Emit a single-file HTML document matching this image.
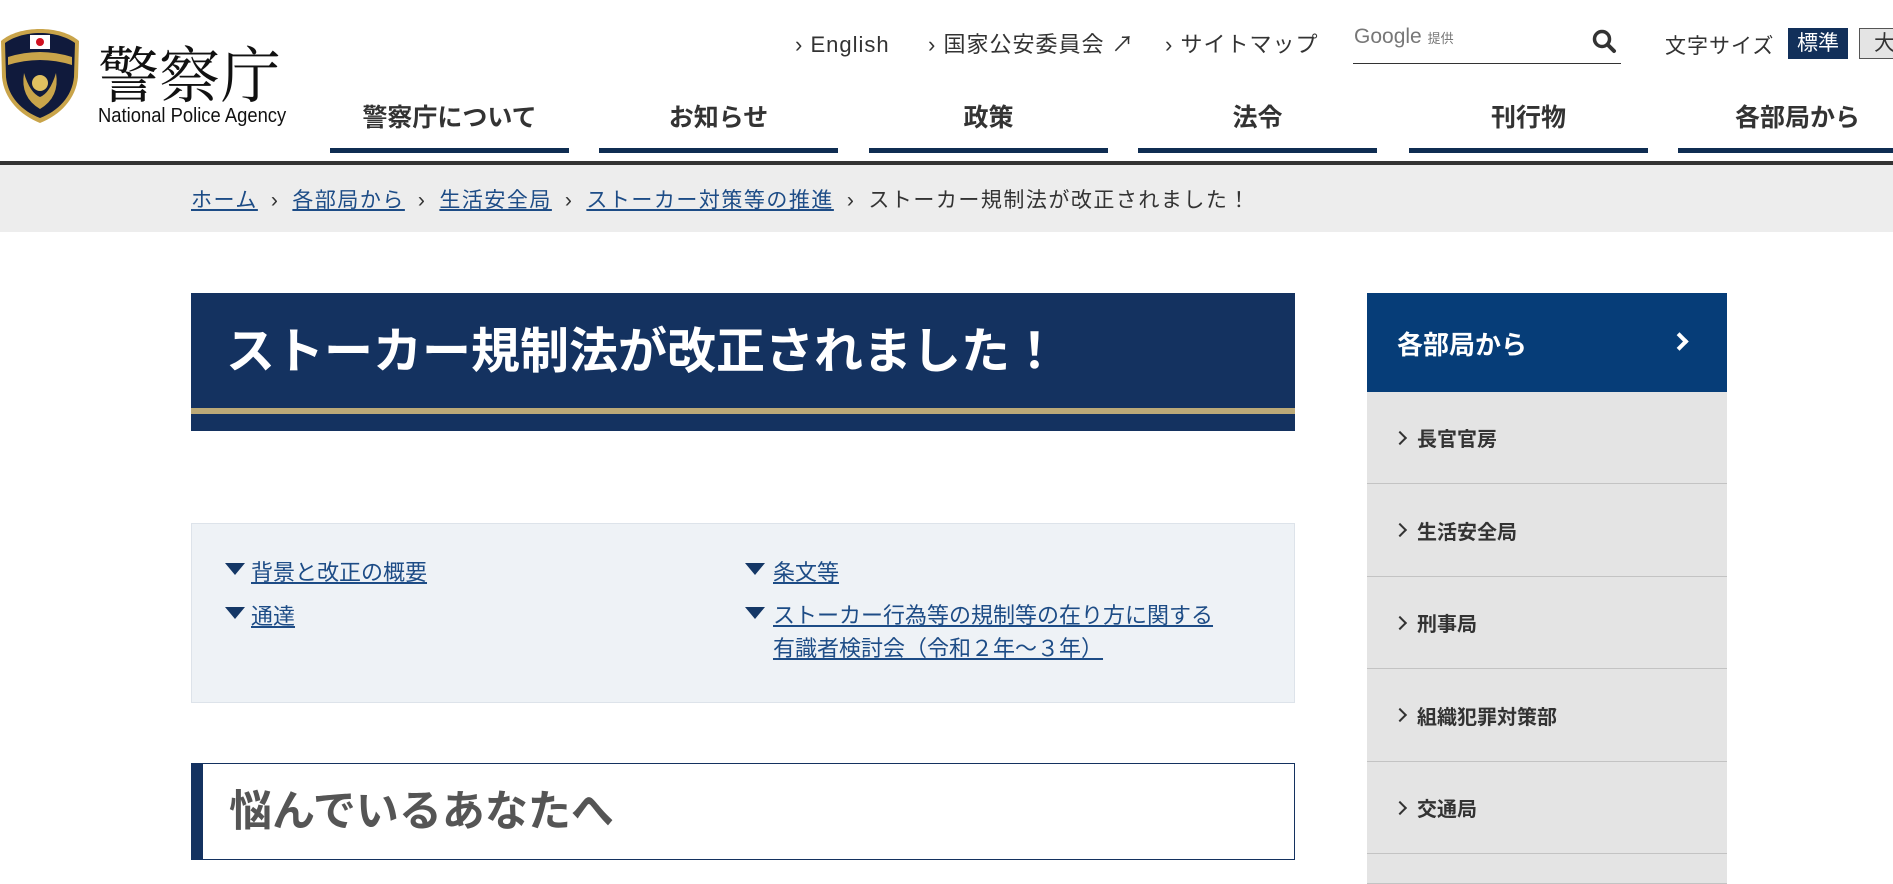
<!DOCTYPE html>
<html><head><meta charset="utf-8"><style>
*{margin:0;padding:0;box-sizing:border-box}
body{width:1893px;height:876px;overflow:hidden;background:#fff;font-family:"Liberation Sans","Noto Sans CJK JP",sans-serif;color:#333;position:relative}
.a{position:absolute;white-space:nowrap}
.nav{position:absolute;top:98px;width:239px;text-align:center;font-weight:bold;font-size:25px;color:#333;height:55px;border-bottom:5px solid #0f2d52}
.tl{font-size:22px;color:#333;top:30px;line-height:30px;letter-spacing:1px}
.bc{font-size:21px;top:186px;line-height:30px;letter-spacing:1.5px}
.bc u{color:#1d4c86}
.bc i{font-style:normal;margin:0 13px}
.lnk{font-size:22px;color:#1d4c86;text-decoration:underline}
.tri{position:absolute;width:0;height:0;border-left:10px solid transparent;border-right:10px solid transparent;border-top:12px solid #143766}
.side{position:absolute;left:1367px;width:360px;background:#e4e4e4;border-bottom:1px solid #c3c3c3;font-weight:bold;font-size:20px;color:#333;padding-left:50px;display:flex;align-items:center}
.side.c:before{content:"";position:absolute;left:28px;width:8px;height:8px;border-top:2px solid #333;border-right:2px solid #333;transform:rotate(45deg)}
</style></head><body>
<svg class="a" style="left:0;top:27px" width="80" height="97" viewBox="0 0 80 97">
<path d="M40 2 C55 2 70 6 79 14 L78 50 C76 72 60 88 40 96 C20 88 4 72 2 50 L1 14 C10 6 25 2 40 2Z" fill="#c9a44a"/>
<path d="M40 6 C54 6 67 10 75 16 L74 50 C72 70 58 84 40 91 C22 84 8 70 6 50 L5 16 C13 10 26 6 40 6Z" fill="#101a3c"/>
<rect x="30" y="8" width="20" height="14" fill="#fff"/><circle cx="40" cy="15" r="4" fill="#d01020"/>
<path d="M8 30 Q40 20 72 30 L72 38 Q40 28 8 38Z" fill="#c9a44a"/>
<path d="M24 46 Q20 70 40 82 Q60 70 56 46 Q50 66 40 70 Q30 66 24 46Z" fill="#c9a44a"/>
<circle cx="40" cy="56" r="8" fill="#e0c060"/>
</svg>
<div class="a" style="left:98px;top:36px;font-family:'Noto Serif CJK SC','Liberation Serif',serif;font-size:61px;line-height:72px;color:#111">警察庁</div>
<div class="a" style="left:98px;top:105px;font-family:'Liberation Sans Narrow','Liberation Sans',sans-serif;font-size:20px;color:#111;transform:scaleX(0.92);transform-origin:left">National Police Agency</div>
<div class="a tl" style="left:795px">› English</div>
<div class="a tl" style="left:928px">› 国家公安委員会 ↗</div>
<div class="a tl" style="left:1165px">› サイトマップ</div>
<div class="a" style="left:1353px;top:22px;width:268px;height:42px;border-bottom:1px solid #333"><span style="font-size:21px;color:#777;position:absolute;left:1px;top:3px">Google <span style="font-size:13px">提供</span></span>
<svg style="position:absolute;left:238px;top:6px" width="26" height="26" viewBox="0 0 26 26"><circle cx="11" cy="11" r="7.5" fill="none" stroke="#333" stroke-width="3.5"/><path d="M16.5 16.5 L23 23" stroke="#333" stroke-width="4" stroke-linecap="round"/></svg></div>
<div class="a" style="left:1665px;top:30px;font-size:21px;color:#333;letter-spacing:1px">文字サイズ</div>
<div class="a" style="left:1788px;top:28px;width:60px;height:31px;background:#12305a;color:#fff;font-size:21px;text-align:center;line-height:31px">標準</div>
<div class="a" style="left:1859px;top:28px;width:60px;height:31px;background:#e4e4e4;border:1px solid #555;color:#333;font-size:21px;padding-left:14px;line-height:29px">大</div>
<div class="nav" style="left:330px">警察庁について</div>
<div class="nav" style="left:599px">お知らせ</div>
<div class="nav" style="left:869px">政策</div>
<div class="nav" style="left:1138px">法令</div>
<div class="nav" style="left:1409px">刊行物</div>
<div class="nav" style="left:1678px">各部局から</div>
<div class="a" style="left:0;top:161px;width:1893px;height:4px;background:#333"></div>
<div class="a" style="left:0;top:165px;width:1893px;height:67px;background:#ededed"></div>
<div class="a bc" style="left:191px"><u>ホーム</u><i>›</i><u>各部局から</u><i>›</i><u>生活安全局</u><i>›</i><u>ストーカー対策等の推進</u><i>›</i>ストーカー規制法が改正されました！</div>
<div class="a" style="left:191px;top:293px;width:1104px;height:138px;background:#143260"></div>
<div class="a" style="left:191px;top:408px;width:1104px;height:6px;background:#bba978"></div>
<div class="a" style="left:226px;top:322px;font-size:49px;font-weight:bold;color:#fff;line-height:60px">ストーカー規制法が改正されました！</div>
<div class="a" style="left:191px;top:523px;width:1104px;height:180px;background:#eef2f6;border:1px solid #dde3ea"></div>
<div class="tri" style="left:225px;top:563px"></div><div class="a lnk" style="left:251px;top:555px">背景と改正の概要</div>
<div class="tri" style="left:225px;top:607px"></div><div class="a lnk" style="left:251px;top:599px">通達</div>
<div class="tri" style="left:745px;top:563px"></div><div class="a lnk" style="left:773px;top:555px">条文等</div>
<div class="tri" style="left:745px;top:607px"></div><div class="a lnk" style="left:773px;top:599px;line-height:33px;white-space:normal;width:450px">ストーカー行為等の規制等の在り方に関する有識者検討会（令和２年～３年）</div>
<div class="a" style="left:191px;top:763px;width:1104px;height:97px;border:1px solid #143260;border-left:12px solid #143260"></div>
<div class="a" style="left:229px;top:785px;font-size:43px;font-weight:bold;color:#555;line-height:54px">悩んでいるあなたへ</div>
<div class="a" style="left:1367px;top:293px;width:360px;height:99px;background:#063d78;color:#fff;font-weight:bold;font-size:26px;padding:32px 0 0 30px">各部局から
<div style="position:absolute;left:306px;top:42px;width:13px;height:13px;border-top:4px solid #fff;border-right:4px solid #fff;transform:rotate(45deg)"></div></div>
<div class="side c" style="top:392px;height:92px">長官官房</div>
<div class="side c" style="top:484px;height:93px">生活安全局</div>
<div class="side c" style="top:577px;height:92px">刑事局</div>
<div class="side c" style="top:669px;height:93px">組織犯罪対策部</div>
<div class="side c" style="top:762px;height:92px">交通局</div>
<div class="side" style="top:854px;height:30px"></div>
</body></html>
